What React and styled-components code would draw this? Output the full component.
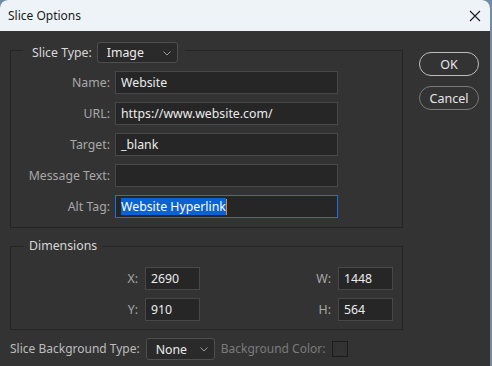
import styled, { createGlobalStyle } from 'styled-components';

const GlobalStyle = createGlobalStyle`
  html, body {
    margin: 0;
    padding: 0;
    background: #6f8cab;
    overflow: hidden;
  }
`;

const uiFont = `"Noto Sans", "Open Sans", "Liberation Sans", sans-serif`;
const groupLine = '#252525';

const App = () => {
  return(
    <>
      <GlobalStyle/>
      <Window>
        <TitleBar>
          <Title>Slice Options</Title>
          <CloseIcon width="12" height="12" viewBox="0 0 12 12">
            <path d="M1 1 L11 11 M11 1 L1 11" stroke="#1b1b1b" strokeWidth="1.1" fill="none"/>
          </CloseIcon>
        </TitleBar>
        <Body>
          <Main>
            <Group>
              <GroupHead $lead="13px" $height="21px" $line="13px">
                <Legend $pad="9px" $padRight="7px">
                  <LegendLabel>Slice Type:</LegendLabel>
                  <Select $width="81px">
                    Image
                    <Chevron/>
                  </Select>
                </Legend>
              </GroupHead>
              <GroupBody $pad="8px 0 9px 12px">
                <FormGrid>
                  <Label>Name:</Label>
                  <Field>Website</Field>
                  <Label>URL:</Label>
                  <Field>https://www.website.com/</Field>
                  <Label>Target:</Label>
                  <Field>_blank</Field>
                  <Label>Message Text:</Label>
                  <Field></Field>
                  <Label>Alt Tag:</Label>
                  <Field $focused>
                    <Selected>Website Hyperlink</Selected>
                    <Caret/>
                  </Field>
                </FormGrid>
              </GroupBody>
            </Group>
            <Group $gap="9px">
              <GroupHead $lead="14px" $height="18px" $line="9px">
                <Legend $pad="5px" $padRight="5px">
                  <LegendLabel>Dimensions</LegendLabel>
                </Legend>
              </GroupHead>
              <GroupBody $pad="12px 0 8px 12px">
                <DimGrid>
                  <Label>X:</Label>
                  <Field>2690</Field>
                  <Label>W:</Label>
                  <Field>1448</Field>
                  <Label>Y:</Label>
                  <Field>910</Field>
                  <Label>H:</Label>
                  <Field>564</Field>
                </DimGrid>
              </GroupBody>
            </Group>
            <BottomRow>
              <BottomLabel>Slice Background Type:</BottomLabel>
              <Select $width="69px" $height="22px">
                None
                <Chevron/>
              </Select>
              <BottomLabel $dim>Background Color:</BottomLabel>
              <Swatch/>
            </BottomRow>
          </Main>
          <Buttons>
            <Button $primary>OK</Button>
            <Button>Cancel</Button>
          </Buttons>
        </Body>
      </Window>
    </>
  );
};

export default App;

const Chevron = () => (
  <ChevronSvg width="8" height="5" viewBox="0 0 8 5">
    <path d="M0.5 0.5 L4 4 L7.5 0.5" stroke="#9a9a9a" strokeWidth="1" fill="none"/>
  </ChevronSvg>
);

const Window = styled.div`
  width: 490px;
  height: 366px;
  border-radius: 8px 8px 0 0;
  overflow: hidden;
  background: #333333;
  display: flex;
  flex-direction: column;
  font-family: ${uiFont};
`;

const TitleBar = styled.div`
  height: 31px;
  flex: none;
  background: #eef3f8;
  display: flex;
  align-items: center;
  justify-content: space-between;
  padding: 0 9px 0 8px;
`;

const Title = styled.div`
  font-size: 12px;
  color: #1a1a1a;
`;

const CloseIcon = styled.svg`
  display: block;
`;

const Body = styled.div`
  flex: 1;
  display: flex;
  gap: 16px;
  padding: 11px 0 0 10px;
`;

const Main = styled.div`
  width: 393px;
  display: flex;
  flex-direction: column;
`;

const Group = styled.section`
  display: flex;
  flex-direction: column;
  margin-top: ${p => p.$gap || '0'};
`;

const GroupHead = styled.div`
  display: flex;
  height: ${p => p.$height};

  &::before,
  &::after {
    content: '';
    box-sizing: border-box;
    align-self: flex-end;
    height: ${p => p.$line};
    border-top: 1px solid ${groupLine};
  }

  &::before {
    width: ${p => p.$lead};
    border-left: 1px solid ${groupLine};
  }

  &::after {
    flex: 1;
    border-right: 1px solid ${groupLine};
  }
`;

const GroupBody = styled.div`
  border: 1px solid ${groupLine};
  border-top: none;
  padding: ${p => p.$pad};
`;

const Legend = styled.div`
  display: flex;
  align-items: center;
  gap: 5px;
  padding: 0 ${p => p.$padRight} 0 ${p => p.$pad};
`;

const LegendLabel = styled.span`
  font-size: 12.3px;
  line-height: 18px;
  color: #d8d8d8;
`;

const Select = styled.div`
  display: flex;
  box-sizing: border-box;
  width: ${p => p.$width};
  height: ${p => p.$height || '21px'};
  border: 1px solid #4e4e4e;
  border-radius: 3px;
  background: #2a2a2a;
  color: #ececec;
  font-size: 12.3px;
  align-items: center;
  justify-content: space-between;
  padding: 0 6px 0 9px;
`;

const ChevronSvg = styled.svg`
  display: block;
  margin-top: 1px;
`;

const FormGrid = styled.div`
  display: grid;
  grid-template-columns: 87px 223px;
  column-gap: 5px;
  row-gap: 8px;
`;

const DimGrid = styled.div`
  display: grid;
  grid-template-columns: 122px 55px 138px 55px;
  row-gap: 8px;

  & > span {
    padding-right: 7px;
  }
`;

const Label = styled.span`
  font-size: 12.3px;
  color: #a8a8a8;
  text-align: right;
  align-self: center;
`;

const Field = styled.div`
  box-sizing: border-box;
  height: 23px;
  border: 1px solid ${p => p.$focused ? '#1a72e0' : '#484848'};
  background: #262626;
  color: #ececec;
  font-size: 12.3px;
  display: flex;
  align-items: center;
  padding-left: 5px;
  white-space: nowrap;
  overflow: hidden;
`;

const Selected = styled.span`
  background: #0b63d1;
  color: #ffffff;
  line-height: 17px;
`;

const Caret = styled.span`
  width: 1px;
  height: 16px;
  background: #e8842a;
`;

const BottomRow = styled.div`
  display: flex;
  align-items: center;
  margin-top: 8px;
  gap: 6px;
`;

const BottomLabel = styled.span`
  font-size: 12px;
  line-height: 18px;
  color: ${p => p.$dim ? '#7b7b7b' : '#bdbdbd'};
  white-space: nowrap;
`;

const Swatch = styled.div`
  width: 16px;
  height: 16px;
  box-sizing: border-box;
  border: 1px solid #1c1c1c;
`;

const Buttons = styled.div`
  display: flex;
  flex-direction: column;
  gap: 10px;
  padding-top: 10px;
`;

const Button = styled.div`
  box-sizing: border-box;
  width: 60px;
  height: 24px;
  border-radius: 12px;
  border: ${p => p.$primary ? '1.5px solid #bdbdbd' : '1px solid #7a7a7a'};
  color: #e6e6e6;
  font-size: 12.5px;
  display: flex;
  align-items: center;
  justify-content: center;
`;
